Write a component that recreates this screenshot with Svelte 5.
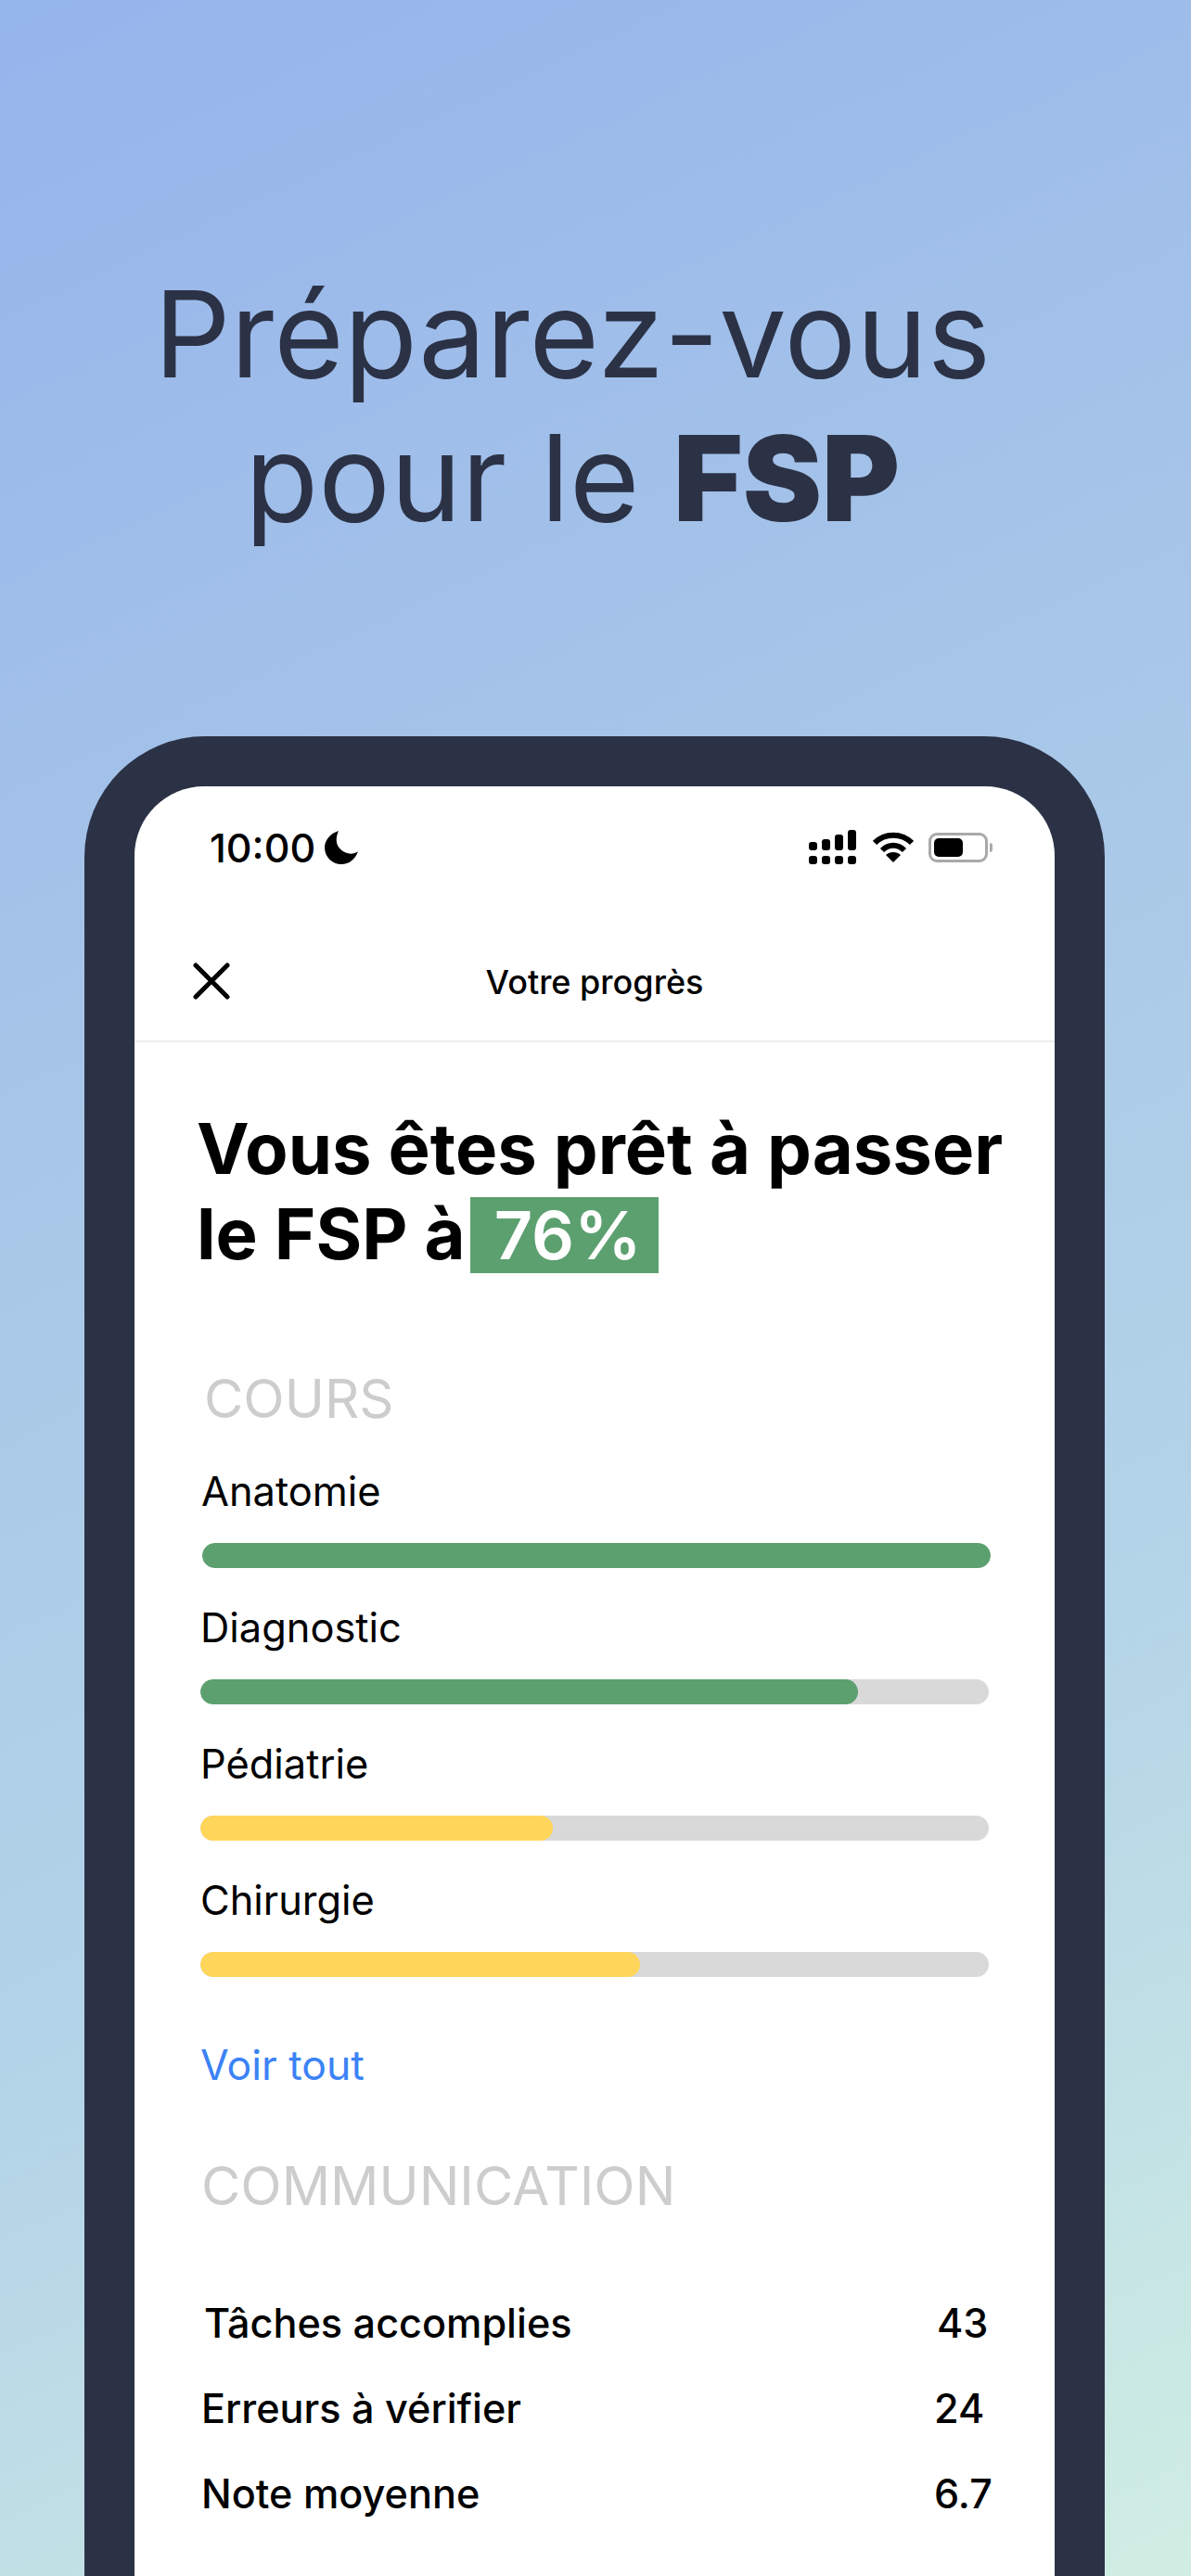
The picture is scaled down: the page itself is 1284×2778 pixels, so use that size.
<script>
	const courses = [
		{ name: 'Anatomie', value: 100, color: '#5ca06f', first: true },
		{ name: 'Diagnostic', value: 83.4, color: '#5ca06f' },
		{ name: 'Pédiatrie', value: 44.7, color: '#ffd65a' },
		{ name: 'Chirurgie', value: 55.8, color: '#ffd65a' }
	];

	const stats = [
		{ label: 'Tâches accomplies', value: '43', first: true },
		{ label: 'Erreurs à vérifier', value: '24' },
		{ label: 'Note moyenne', value: '6.7' }
	];
</script>

<div class="page">
	<h1 class="hero">Préparez-vous<br />pour le <b>FSP</b></h1>

	<div class="phone">
		<div class="screen">
			<div class="status">
				<div class="time">
					<span>10:00</span>
					<svg width="36" height="36" viewBox="0 0 34 34">
						<path d="M14 0 C5 3 0 10 0 17 C0 27 8 34 17 34 C25 34 31 29 34 21 C31 23 27 24 24 23 C17 21 12 16 12 9 C12 6 13 3 14 0 Z" fill="#000" />
					</svg>
				</div>
				<div class="icons">
					<svg width="54" height="38" viewBox="0 0 54 38" fill="#000">
						<rect x="1" y="13" width="9" height="9" rx="3" />
						<rect x="15" y="10" width="9" height="12" rx="3" />
						<rect x="29" y="5" width="9" height="17" rx="3" />
						<rect x="43" y="0" width="9" height="22" rx="3" />
						<rect x="1" y="28" width="9" height="9" rx="3" />
						<rect x="15" y="28" width="9" height="9" rx="3" />
						<rect x="29" y="28" width="9" height="9" rx="3" />
						<rect x="43" y="28" width="9" height="9" rx="3" />
					</svg>
					<svg width="44" height="34" viewBox="0 0 44 34" fill="none" stroke="#000" stroke-width="6">
						<path d="M2 12 C13 1 31 1 42 12" />
						<path d="M10 20 C17 13 27 13 34 20" />
						<path d="M22 33 L14 25 C18 21 26 21 30 25 Z" fill="#000" stroke="none" />
					</svg>
					<div class="battery">
						<div class="battery-body"><div class="battery-level"></div></div>
						<div class="battery-cap"></div>
					</div>
				</div>
			</div>

			<div class="nav">
				<svg class="close" width="40" height="40" viewBox="0 0 40 40" stroke="#000" stroke-width="5" stroke-linecap="round">
					<path d="M3 3 L37 37 M37 3 L3 37" />
				</svg>
				<span>Votre progrès</span>
			</div>

			<div class="content">
				<h2 class="headline">Vous êtes prêt à passer<br />le FSP à<span class="score">76%</span></h2>

				<div class="section-title cours">COURS</div>
				<div class="courses">
					{#each courses as course}
						<div class="course" class:first={course.first}>
							<div class="course-name">{course.name}</div>
							<div class="track">
								<div class="fill" style="width: {course.value}%; background: {course.color}"></div>
							</div>
						</div>
					{/each}
				</div>

				<div class="link">Voir tout</div>

				<div class="section-title comm">COMMUNICATION</div>
				<div class="stats">
					{#each stats as stat}
						<div class="stat" class:first={stat.first}>
							<span>{stat.label}</span>
							<span>{stat.value}</span>
						</div>
					{/each}
				</div>
			</div>
		</div>
	</div>
</div>

<style>
	:global(body) {
		margin: 0;
	}

	.page {
		width: 1284px;
		height: 2778px;
		overflow: hidden;
		background: linear-gradient(155deg, #94b4ec 0%, #a7c5e8 35%, #b4d4e8 68%, #d0eee3 100%);
		font-family: Inter, sans-serif;
		color: #000;
	}

	.hero {
		margin: 0;
		padding: 283px 50px 0 0;
		height: 794px;
		box-sizing: border-box;
		text-align: center;
		font-size: 129.5px;
		line-height: 155px;
		font-weight: 400;
		color: #2c3246;
	}

	.hero b {
		font-size: 128px;
		font-weight: 900;
	}

	.phone {
		width: 992px;
		margin-left: 91px;
		padding: 54px 54px 0;
		background: #2c3246;
		border-radius: 130px 130px 0 0;
		height: 1930px;
	}

	.screen {
		height: 100%;
		background: #fff;
		border-radius: 75px 75px 0 0;
	}

	.status {
		display: flex;
		justify-content: space-between;
		align-items: center;
		height: 92px;
		padding: 20px 67px 0 81px;
	}

	.time {
		display: flex;
		align-items: center;
		gap: 10px;
		font-size: 43px;
		font-weight: 500;
	}

	.icons {
		display: flex;
		align-items: center;
		gap: 16px;
	}

	.battery {
		display: flex;
		align-items: center;
		gap: 2px;
	}

	.battery-body {
		width: 64px;
		height: 32px;
		box-sizing: border-box;
		padding: 3px;
		border: 3px solid #a9a9a9;
		border-radius: 9px;
	}

	.battery-level {
		width: 60%;
		height: 100%;
		background: #000;
		border-radius: 5px;
	}

	.battery-cap {
		width: 3px;
		height: 10px;
		background: #a9a9a9;
		border-radius: 0 3px 3px 0;
	}

	.nav {
		position: relative;
		display: flex;
		justify-content: center;
		align-items: center;
		box-sizing: border-box;
		height: 164px;
		padding-top: 36px;
		border-bottom: 2px solid #eeeeee;
		font-size: 36px;
		font-weight: 500;
	}

	.close {
		position: absolute;
		left: 63px;
		top: 78px;
	}

	.content {
		padding: 0 0 0 69px;
	}

	.headline {
		margin: 0 0 0 -2px;
		padding-top: 68px;
		font-size: 76px;
		line-height: 92px;
		font-weight: 700;
		white-space: nowrap;
	}

	.score {
		display: inline-block;
		box-sizing: border-box;
		width: 203px;
		height: 82px;
		line-height: 82px;
		margin-left: 5px;
		margin-top: 7px;
		padding-left: 8px;
		text-align: center;
		vertical-align: top;
		background: #5ca06f;
		color: #fff;
		font-size: 72px;
		font-weight: 600;
	}

	.section-title {
		font-size: 58px;
		color: #cdcdcd;
		line-height: 64px;
	}

	.cours {
		margin: 100px 0 0 6px;
	}

	.comm {
		margin: 72px 0 0 3px;
	}

	.courses {
		width: 850px;
		margin-left: 2px;
		margin-top: 42px;
		display: flex;
		flex-direction: column;
		gap: 38px;
	}

	.course.first {
		margin: 0 -2px 0 2px;
	}

	.course.first .course-name {
		margin-left: -1px;
	}

	.course-name {
		font-size: 43.4px;
		line-height: 52px;
		margin-bottom: 30px;
	}

	.track {
		height: 27px;
		border-radius: 14px;
		background: #d9d9d9;
		overflow: hidden;
	}

	.fill {
		height: 100%;
		border-radius: 14px;
	}

	.link {
		margin: 69px 0 0 2px;
		font-size: 44.5px;
		line-height: 52px;
		color: #3b82f6;
	}

	.stats {
		margin: 90px 0 0 3px;
		display: flex;
		flex-direction: column;
		gap: 40px;
	}

	.stat {
		display: grid;
		grid-template-columns: 790px auto;
		font-size: 43.2px;
		line-height: 52px;
		font-weight: 500;
	}

	.stat.first {
		margin-left: 3px;
	}
</style>
